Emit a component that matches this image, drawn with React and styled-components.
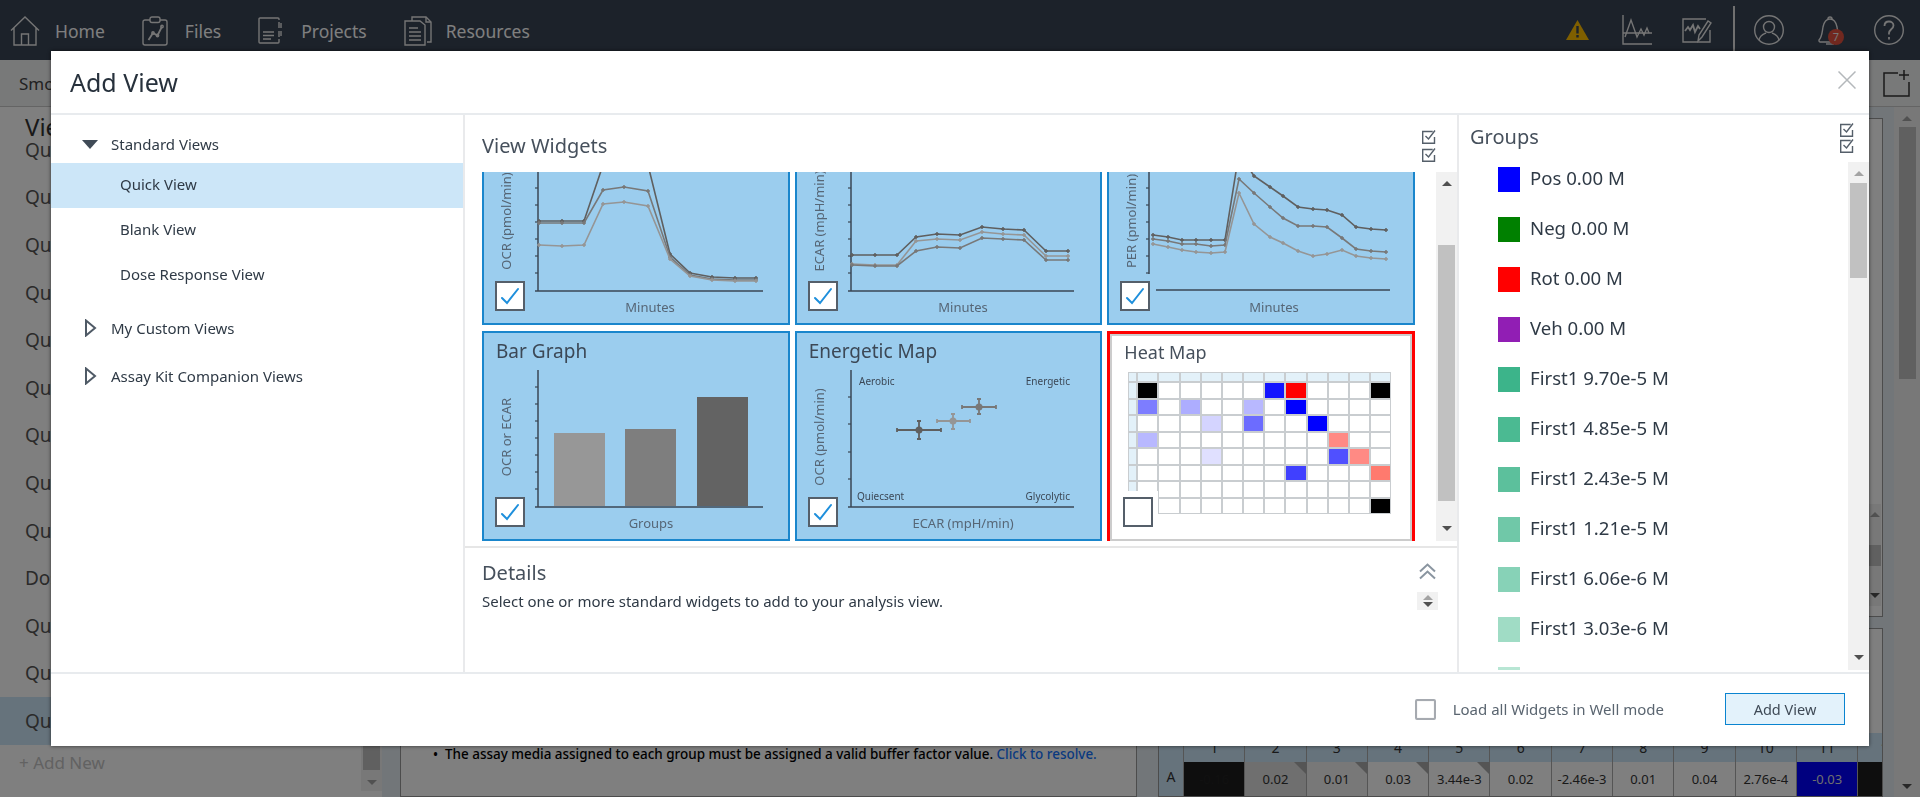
import React from "react";
import styled, { createGlobalStyle } from "styled-components";

const GlobalStyle = createGlobalStyle`
  html, body {
    margin: 0;
    padding: 0;
    height: 100%;
    overflow: hidden;
    font-family: "Noto Sans", "Open Sans", sans-serif;
    color: #333f4d;
  }
  * {
    box-sizing: border-box;
  }
`;

/* ---------- page behind the dialog ---------- */

const Page = styled.div`
  width: 1920px;
  height: 797px;
  overflow: hidden;
  background: #e4ecf2;
  display: flex;
  flex-direction: column;
`;

const NavBar = styled.div`
  height: 60px;
  flex: none;
  background: #384454;
  display: flex;
  align-items: center;
  padding-left: 10px;
  gap: 37px;
`;

const NavItem = styled.div`
  display: flex;
  align-items: center;
  gap: ${(p) => p.$gap}px;
  color: #fff;
  font-size: 17.5px;
  padding-top: 2px;
  svg {
    fill: none;
    stroke: #eaeaea;
    stroke-width: 1.4;
    display: block;
    margin-top: -1px;
  }
`;

const NavTools = styled.div`
  margin-left: auto;
  padding-right: 16px;
  display: flex;
  align-items: center;
  height: 100%;
  svg {
    fill: none;
    stroke: #eaeaea;
    stroke-width: 1.4;
    display: block;
  }
`;

const NavTool = styled.div`
  position: relative;
  margin-left: ${(p) => p.$ml}px;
`;

const NavDivider = styled.div`
  width: 2px;
  height: 48px;
  margin: 0 0 0 21px;
  background: #e0e0e0;
`;

const BellBadge = styled.span`
  position: absolute;
  right: 1px;
  bottom: 0;
  width: 16px;
  height: 16px;
  border-radius: 50%;
  background: #e2503e;
  color: #eee;
  font-size: 11px;
  line-height: 16px;
  text-align: center;
`;

const SubBar = styled.div`
  height: 47px;
  flex: none;
  background: #f1f2f3;
  border-bottom: 1px solid #c8c8c8;
  display: flex;
  align-items: center;
  justify-content: space-between;
  padding: 0 10px 0 19px;
  font-size: 17px;
  color: #444;
`;

const PageBody = styled.div`
  flex: 1;
  min-height: 0;
  display: flex;
`;

const SideCol = styled.div`
  width: 382px;
  flex: none;
  background: #fff;
  display: flex;
`;

const SideList = styled.div`
  flex: 1;
  min-width: 0;
`;

const SideHeading = styled.div`
  font-size: 24px;
  line-height: 30px;
  padding: 5px 0 0 25px;
  margin-bottom: -16px;
  color: #333;
`;

const SideRow = styled.div`
  height: 47.6px;
  display: flex;
  align-items: center;
  padding-left: 25px;
  font-size: 19px;
  color: #555;
  background: ${(p) => (p.$active ? "#cce6f8" : "transparent")};
`;

const AddNew = styled.div`
  padding: 6px 0 0 19px;
  font-size: 17px;
  color: #c4c4c4;
`;

const Track = styled.div`
  width: ${(p) => p.$w}px;
  flex: none;
  background: #f1f1f1;
  display: flex;
  flex-direction: column;
  align-items: center;
  justify-content: space-between;
  padding: ${(p) => p.$pad || "6px 0"};
`;

const SideTrack = styled(Track)`
  margin-bottom: 6px;
`;

const Thumb = styled.div`
  width: 17px;
  height: ${(p) => p.$h}px;
  margin-top: ${(p) => p.$mt}px;
  margin-bottom: auto;
  background: #c1c1c1;
`;

const Arrow = styled.div`
  width: 0;
  height: 0;
  border-left: 5px solid transparent;
  border-right: 5px solid transparent;
  ${(p) => (p.$down ? "border-top" : "border-bottom")}: 5px solid ${(p) => (p.$dim ? "#a3a3a3" : "#505050")};
`;

const MainPanel = styled.div`
  width: 737px;
  flex: none;
  margin-left: 18px;
  background: #fff;
  border: 1px solid #999;
  display: flex;
  flex-direction: column;
  justify-content: flex-end;
  padding: 0 0 32px 32px;
`;

const Notice = styled.div`
  font-size: 13.45px;
  font-weight: 500;
  line-height: 20px;
  color: #000;
  white-space: nowrap;
  a {
    color: #1474ff;
  }
`;

const RightCol = styled.div`
  width: 725px;
  flex: none;
  margin-left: 21px;
  display: flex;
  flex-direction: column;
  gap: 11px;
  padding-top: 11px;
`;

const TopPanel = styled.div`
  height: 499px;
  flex: none;
  background: #fff;
  border: 1px solid #999;
  display: flex;
  justify-content: flex-end;
  align-items: flex-end;
  padding-bottom: 10px;
`;

const MiniTrack = styled(Track)`
  height: 102px;
  margin-right: 1px;
`;

const MiniThumb = styled.div`
  width: 100%;
  height: 21px;
  background: #c1c1c1;
`;

const TablePanel = styled.div`
  flex: 1;
  min-height: 0;
  background: #fff;
  border: 1px solid #999;
  padding-top: 104px;
  overflow: hidden;
`;

const WellTable = styled.div`
  display: grid;
  grid-template-columns: 25px repeat(12, 61.3px);
  grid-template-rows: 29px 34px;
`;

const WellHead = styled.div`
  background: #cce6f8;
  border-right: 1px solid #aaa;
  font-size: 14px;
  text-align: center;
  line-height: 29px;
  color: #333;
`;

const WellCell = styled.div`
  position: relative;
  background: ${(p) => p.$bg || "#fff"};
  color: ${(p) => p.$fg || "#333"};
  border-right: 1px solid #aaa;
  font-size: 13px;
  line-height: 34px;
  text-align: center;
  ${(p) =>
    p.$flag &&
    `&::after {
      content: "";
      position: absolute;
      right: 0;
      top: 0;
      border-top: 12px solid #aaa;
      border-left: 12px solid transparent;
    }`}
`;

const PageScroll = styled(Track)`
  margin-left: 11px;
`;

/* ---------- dialog ---------- */

const Backdrop = styled.div`
  position: fixed;
  inset: 0;
  background: rgba(0, 0, 0, 0.5);
  padding: 51px;
`;

const Modal = styled.div`
  height: 100%;
  background: #fff;
  display: flex;
  flex-direction: column;
  box-shadow: 0 0 4px rgba(0, 0, 0, 0.6);
`;

const ModalHeader = styled.div`
  height: 64px;
  flex: none;
  border-bottom: 2px solid #e8ebee;
  display: flex;
  align-items: center;
  justify-content: space-between;
  padding: 0 13px 0 19px;
`;

const ModalTitle = styled.h1`
  margin: 0;
  font-size: 25px;
  font-weight: 400;
  color: #27313c;
  line-height: 34px;
`;

const CloseIcon = styled.svg`
  display: block;
  margin-bottom: 5px;
  fill: none;
  stroke: #b4b8bb;
  stroke-width: 1.5;
`;

const ModalBody = styled.div`
  height: 557px;
  flex: none;
  display: flex;
`;

const TreeCol = styled.div`
  width: 414px;
  flex: none;
  border-right: 2px solid #e9eaec;
  padding-top: 8px;
  font-size: 15px;
  color: #2f3a46;
`;

const TreeHead = styled.div`
  height: ${(p) => p.$h}px;
  margin-top: ${(p) => p.$mt || 0}px;
  display: flex;
  align-items: center;
  padding-left: 31px;
  padding-top: ${(p) => p.$pt || 0}px;
  padding-bottom: ${(p) => p.$pb || 0}px;
  gap: 13px;
  svg {
    display: block;
    flex: none;
  }
`;

const TreeLeaf = styled.div`
  height: 45px;
  display: flex;
  align-items: center;
  padding: 0 0 3px 69px;
  background: ${(p) => (p.$active ? "#cce6f8" : "transparent")};
`;

const CenterCol = styled.div`
  width: 994px;
  flex: none;
  border-right: 2px solid #e9eaec;
  display: flex;
  flex-direction: column;
`;

const PaneHead = styled.div`
  height: ${(p) => p.$h}px;
  flex: none;
  display: flex;
  justify-content: space-between;
  align-items: flex-start;
  padding: 0 ${(p) => p.$pr}px 0 ${(p) => p.$pl}px;
`;

const PaneTitle = styled.div`
  font-size: 20px;
  line-height: 26px;
  margin-top: ${(p) => p.$mt}px;
  color: #46505c;
`;

const CheckAll = styled.div`
  display: flex;
  flex-direction: column;
  gap: ${(p) => p.$gap}px;
  margin-top: ${(p) => p.$mt}px;
  svg {
    display: block;
    fill: none;
    stroke: #555f6a;
    stroke-width: 1.4;
  }
`;

const WidgetArea = styled.div`
  height: 369px;
  flex: none;
  display: flex;
`;

const WidgetViewport = styled.div`
  flex: 1;
  min-width: 0;
  overflow: hidden;
  padding-left: 17px;
`;

const WidgetGrid = styled.div`
  width: 933px;
  margin-top: -57px;
  display: grid;
  grid-template-columns: repeat(3, 1fr);
  grid-auto-rows: 210px;
  column-gap: 5px;
  row-gap: 6px;
`;

const Card = styled.div`
  position: relative;
  overflow: hidden;
  background: #9bcdee;
  border: 2px solid #1a86cc;
`;

/* runs past the bottom of the scroll area, so its lower red edge is hidden */
const HeatCard = styled.div`
  position: relative;
  overflow: hidden;
  height: 213px;
  background: #fff;
  border: 3px solid #ff0000;
  box-shadow: inset 0 0 0 2px #ccc;
`;

const CardTitle = styled.div`
  position: absolute;
  left: 12px;
  top: 4px;
  font-size: 19px;
  line-height: 28px;
  color: #3c4856;
`;

const HeatTitle = styled.div`
  font-size: 18px;
  line-height: 24px;
  padding: 6px 0 0 14px;
  color: #46505c;
`;

const Chart = styled.svg`
  display: block;
  font-family: "Noto Sans", "Open Sans", sans-serif;
`;

const CheckBox = styled.div`
  position: absolute;
  left: ${(p) => p.$left}px;
  top: ${(p) => p.$top}px;
  width: 30px;
  height: 30px;
  background: #fff;
  border: 2px solid #555f6a;
  svg {
    display: block;
    fill: none;
    stroke: #1e8fdc;
    stroke-width: 2;
  }
`;

const HeatGrid = styled.div`
  margin: 8px 0 0 18px;
  width: 263px;
  height: 142px;
  padding: 1px;
  background: #c9cdd0;
  display: grid;
  grid-template-columns: 7px repeat(12, 1fr);
  grid-template-rows: 8px repeat(8, 1fr);
  gap: 2px;
`;

const HeatCell = styled.div`
  background: ${(p) => p.$c};
`;

const CheckPatch = styled.div`
  position: absolute;
  left: 13px;
  top: 157px;
  width: 35px;
  height: 40px;
  background: #fff;
`;

const DetailsPane = styled.div`
  flex: 1;
  min-height: 0;
  margin-top: 5px;
  border-top: 2px solid #e6e6e6;
  display: flex;
  justify-content: space-between;
  padding: 12px 19px 0 17px;
`;

const DetailsTitle = styled.div`
  font-size: 20px;
  line-height: 26px;
  color: #46505c;
`;

const DetailsText = styled.div`
  margin-top: 5px;
  font-size: 15px;
  line-height: 20px;
  color: #2f3a46;
`;

const DetailsSide = styled.div`
  display: flex;
  flex-direction: column;
  align-items: center;
  width: 21px;
  gap: 12px;
  padding-top: 3px;
`;

const Spinner = styled.div`
  width: 21px;
  height: 18px;
  background: #f1f1f1;
  display: flex;
  flex-direction: column;
  align-items: center;
  justify-content: center;
  gap: 2px;
`;

const GroupsCol = styled.div`
  flex: 1;
  min-width: 0;
  display: flex;
  flex-direction: column;
`;

const GroupsArea = styled.div`
  height: 508px;
  flex: none;
  display: flex;
`;

const GroupList = styled.div`
  flex: 1;
  min-width: 0;
  overflow: hidden;
  padding: 5px 0 0 39px;
`;

const GroupRow = styled.div`
  height: 50px;
  display: flex;
  gap: 10px;
  font-size: 18.6px;
  line-height: 22px;
  color: #2f3a46;
`;

const Swatch = styled.div`
  width: 22px;
  height: 25px;
  flex: none;
  background: ${(p) => p.$c};
`;

const Footer = styled.div`
  flex: 1;
  display: flex;
  align-items: center;
  justify-content: flex-end;
  border-top: 2px solid #e8ebee;
  padding: 0 24px 2px 0;
`;

const FooterCheck = styled.div`
  width: 21px;
  height: 21px;
  border: 2px solid #a6aab0;
  border-radius: 2px;
  box-shadow: inset 0 0 1px #bbb;
  margin-right: 17px;
`;

const FooterLabel = styled.div`
  font-size: 15px;
  color: #5a6570;
  margin-right: 61px;
`;

const AddButton = styled.button`
  width: 120px;
  height: 32px;
  border: 1px solid #0a84d0;
  background: #e3f2fb;
  color: #3f4a56;
  font-family: inherit;
  font-size: 14.5px;
  padding: 0;
`;

/* ---------- data ---------- */

const groups = [
  ["Pos 0.00 M", "#0000ff"],
  ["Neg 0.00 M", "#008000"],
  ["Rot 0.00 M", "#ff0000"],
  ["Veh 0.00 M", "#911eb4"],
  ["First1 9.70e-5 M", "#3cb48a"],
  ["First1 4.85e-5 M", "#4bba92"],
  ["First1 2.43e-5 M", "#5cc09c"],
  ["First1 1.21e-5 M", "#70c8a8"],
  ["First1 6.06e-6 M", "#87d2b7"],
  ["First1 3.03e-6 M", "#a0dcc5"],
  ["First1 1.52e-6 M", "#b8e6d4"],
];

const heatColors = {
  "0-0": "#000",
  "0-6": "#1414ff",
  "0-7": "#ff0000",
  "0-11": "#000",
  "1-0": "#7d7dff",
  "1-2": "#adadff",
  "1-5": "#b8b8ff",
  "1-7": "#0000ff",
  "2-3": "#d4d4ff",
  "2-5": "#6c6cff",
  "2-8": "#0000ff",
  "3-0": "#b8b8ff",
  "3-9": "#ff8a84",
  "4-3": "#e0e0ff",
  "4-9": "#5050ff",
  "4-10": "#ff8a84",
  "5-7": "#4040ff",
  "5-11": "#ff7a6e",
  "7-11": "#000",
};

const wellValues = [
  { v: "-0.16", bg: "#1c1c1c", fg: "#222" },
  { v: "0.02", bg: "#dedede", flag: true },
  { v: "0.01", bg: "#f0f0f0", flag: true },
  { v: "0.03", flag: true },
  { v: "3.44e-3", flag: true },
  { v: "0.02" },
  { v: "-2.46e-3" },
  { v: "0.01" },
  { v: "0.04" },
  { v: "2.76e-4" },
  { v: "-0.03", bg: "#0000ff", fg: "#ddd" },
  { v: "0.", bg: "#1c1c1c", fg: "#444" },
];

const DARK = "#5f5f5f";
const MID = "#787878";
const LIGHT = "#959595";

const ocrX = [57, 80, 102, 121, 142, 166, 188, 208, 230, 253, 274];
const ocrSeries = [
  [DARK, [106, 106, 106, 50, 40, 50, 139, 158, 162, 163, 163]],
  [MID, [108, 108, 108, 75, 72, 76, 142, 160, 164, 165, 165]],
  [LIGHT, [130, 131, 130, 89, 87, 91, 144, 161, 165, 166, 166]],
];

const ecarX = [57, 80, 102, 121, 142, 165, 187, 208, 229, 251, 273];
const ecarSeries = [
  [DARK, [140, 140, 140, 122, 119, 120, 112, 114, 115, 136, 136]],
  [LIGHT, [149, 150, 150, 126, 124, 125, 117, 119, 120, 141, 141]],
  [MID, [150, 151, 151, 136, 132, 133, 123, 124, 125, 145, 145]],
];

const perX = [46, 61, 75, 89, 104, 118, 132, 147, 163, 176, 191, 206, 220, 235, 249, 264, 279];
const perSeries = [
  [DARK, [120, 122, 125, 125, 125, 125, 38, 61, 72, 81, 92, 94, 95, 100, 112, 114, 115]],
  [MID, [124, 126, 129, 129, 131, 130, 64, 78, 92, 103, 111, 111, 112, 123, 134, 136, 137]],
  [LIGHT, [129, 132, 135, 137, 138, 137, 78, 109, 122, 128, 136, 141, 139, 135, 141, 143, 144]],
];

const energy = [
  { c: DARK, x: 124, y: 99, l: 102, r: 146, t: 90, b: 108 },
  { c: LIGHT, x: 158, y: 90, l: 142, r: 175, t: 83, b: 98 },
  { c: MID, x: 184, y: 76, l: 167, r: 201, t: 68, b: 83 },
];

const AXIS = "#3a4654";
const LABEL = "#566676";
const TICKS = [56, 73, 90, 107, 124, 141, 158];

/* ---------- icons ---------- */

const HomeIcon = () => (
  <svg width="30" height="30" viewBox="0 0 30 30">
    <path d="M1 14.5 15 1l14 13.5M4 12v17h22V12M11.5 29V18h7v11" />
  </svg>
);

const FilesIcon = () => (
  <svg width="26" height="30" viewBox="0 0 26 30">
    <path d="M8 4H3a2 2 0 0 0-2 2v21a2 2 0 0 0 2 2h20a2 2 0 0 0 2-2V6a2 2 0 0 0-2-2h-5" />
    <rect x="8" y="1" width="10" height="5.5" rx="2" />
    <path d="M6.5 24l4.5-7 4.5 2.5 4.5-9" strokeWidth="1.8" />
    <circle cx="11" cy="17" r="1.2" />
    <circle cx="15.5" cy="19.5" r="1.2" />
    <circle cx="20" cy="10.5" r="1.2" />
  </svg>
);

const ProjectsIcon = () => (
  <svg width="24" height="27" viewBox="0 0 24 27">
    <path d="M21 3V2a1 1 0 0 0-1-1H2a1 1 0 0 0-1 1v23a1 1 0 0 0 1 1h18a1 1 0 0 0 1-1v-3M21 5v6M23 6v5M21 14v6M23 14v5" />
    <path d="M5 15h11M5 18.5h11M5 22h8" />
  </svg>
);

const ResourcesIcon = () => (
  <svg width="28" height="30" viewBox="0 0 28 30">
    <path d="M8 5V1h14l5 5v20h-4" />
    <path d="M22 1v5h5" />
    <path d="M1 5h15l5 4v20H1z" />
    <path d="M5 12h9M5 16h12M5 20h12M5 24h12" />
  </svg>
);

const WarningIcon = () => (
  <svg width="23" height="20" viewBox="0 0 23 20">
    <path d="M11.5 0 23 20H0z" fill="#ffbf00" stroke="none" />
    <rect x="10.3" y="6" width="2.4" height="7.5" fill="#384454" stroke="none" />
    <rect x="10.3" y="15" width="2.4" height="2.5" fill="#384454" stroke="none" />
  </svg>
);

const TraceIcon = () => (
  <svg width="30" height="30" viewBox="0 0 30 30">
    <path d="M1 0v29h29M1 18h29" />
    <path d="M3 22 9 5l6 17 4-8 3 6 3-7 2 5" />
  </svg>
);

const EditTraceIcon = () => (
  <svg width="30" height="25" viewBox="0 0 30 25">
    <path d="M24 1H1v23h27V12" />
    <path d="M3 13l3-4 2 3 3-5 2 7 3-6 2 3" strokeWidth="1.8" />
    <path d="M16 23l1-6 9-14 3 2-9 14z" />
  </svg>
);

const UserIcon = () => (
  <svg width="30" height="30" viewBox="0 0 30 30">
    <circle cx="15" cy="15" r="14.3" />
    <circle cx="15" cy="12" r="5.5" />
    <path d="M5 25c1-5 5-6 7-7M25 25c-1-5-5-6-7-7" />
  </svg>
);

const BellIcon = () => (
  <svg width="30" height="30" viewBox="0 0 30 30">
    <path d="M13 4a2 2 0 0 1 4 0" />
    <path d="M4 25c3-3 3-7 4-13 1-5 4-8 7-8s6 3 7 8c1 6 1 10 4 13 0 1-1 2-2 2H5c-1 0-1-1-1-2z" />
    <path d="M11 29h8" />
  </svg>
);

const HelpIcon = () => (
  <svg width="30" height="30" viewBox="0 0 30 30">
    <circle cx="15" cy="15" r="14.3" />
    <path d="M10.5 11c0-3 2-4.5 4.5-4.5s4.5 1.7 4.5 4c0 3.5-4.5 4-4.5 7.500v1.500" strokeWidth="1.8" />
    <path d="M15 22v2.500" strokeWidth="1.8" />
  </svg>
);

const NewPanelIcon = () => (
  <svg width="27" height="27" viewBox="0 0 27 27" fill="none" stroke="#333" strokeWidth="1.5">
    <path d="M15 3H1v23h25V12" />
    <path d="M21 0v10M16 5h10" />
  </svg>
);

const TickSmall = () => (
  <svg width="14" height="14" viewBox="0 0 14 14">
    <path d="M12.500 7v6.300H.7V1.500h10" />
    <path d="M3.500 6l3 3 6.500-8.500" />
  </svg>
);

const Tick = () => (
  <svg width="26" height="26" viewBox="0 0 26 26">
    <path d="M5 15l5 5L21 6" strokeLinecap="round" />
  </svg>
);

const TreeOpen = () => (
  <svg width="16" height="9" viewBox="0 0 16 9">
    <path d="M0 0h16L8 9z" fill="#3f4a56" />
  </svg>
);

const TreeClosed = () => (
  <svg width="16" height="18" viewBox="0 0 16 18" fill="none" stroke="#4f5a66" strokeWidth="2">
    <path d="M4 1.500 13 9l-9 7.500z" />
  </svg>
);

const DoubleUp = () => (
  <svg width="17" height="17" viewBox="0 0 17 17" fill="none" stroke="#8a95a0" strokeWidth="2" style={{ display: "block" }}>
    <path d="M1 8.500 8.500 1.500 16 8.500M1 15.500l7.500-7 7.500 7" />
  </svg>
);

/* ---------- charts ---------- */

const Axes = ({ x, end, ticks = TICKS, top = 39, y = 176, startX }) => (
  <g stroke={AXIS} fill="none">
    <path d={`M${x} ${top}V${y}`} strokeWidth="1.5" />
    <path d={`M${startX ?? x - 3} ${y}H${end}`} strokeWidth="1.5" />
    {ticks.map((t) => (
      <path key={t} d={`M${x - 3} ${t}H${x}`} strokeWidth="1.2" />
    ))}
  </g>
);

const Lines = ({ xs, series }) =>
  series.map(([color, ys], i) => (
    <g key={i} stroke={color} fill="none">
      <polyline points={xs.map((x, j) => `${x},${ys[j]}`).join(" ")} strokeWidth="1.6" />
      {xs.map((x, j) => (
        <path key={j} d={`M${x - 2} ${ys[j]}h4M${x} ${ys[j] - 2}v4`} strokeWidth="1.5" />
      ))}
    </g>
  ));

const YLabel = ({ children }) => (
  <text transform="rotate(-90 25 106)" x="25" y="110" textAnchor="middle" fontSize="13" fill={LABEL}>
    {children}
  </text>
);

const XLabel = ({ children, x = 168 }) => (
  <text x={x} y="197" textAnchor="middle" fontSize="13" fill={LABEL}>
    {children}
  </text>
);

const ChartFrame = ({ children }) => (
  <Chart width="304" height="206" viewBox="2 2 304 206">
    {children}
  </Chart>
);

const WidgetCheck = () => (
  <CheckBox $left={11} $top={164}>
    <Tick />
  </CheckBox>
);

const OcrCard = () => (
  <Card>
    <ChartFrame>
      <Axes x={56} end={281} />
      <Lines xs={ocrX} series={ocrSeries} />
      <YLabel>OCR (pmol/min)</YLabel>
      <XLabel>Minutes</XLabel>
    </ChartFrame>
    <WidgetCheck />
  </Card>
);

const EcarCard = () => (
  <Card>
    <ChartFrame>
      <Axes x={56} end={279} />
      <Lines xs={ecarX} series={ecarSeries} />
      <YLabel>ECAR (mpH/min)</YLabel>
      <XLabel>Minutes</XLabel>
    </ChartFrame>
    <WidgetCheck />
  </Card>
);

const PerCard = () => (
  <Card>
    <ChartFrame>
      <Axes x={42} end={283} y={160} />
      <path d="M49 175H283" stroke={AXIS} strokeWidth="1.5" />
      <path d="M39 160H283" stroke="#9bcdee" strokeWidth="2" />
      <Lines xs={perX} series={perSeries} />
      <YLabel>PER (pmol/min)</YLabel>
      <XLabel x={167}>Minutes</XLabel>
    </ChartFrame>
    <WidgetCheck />
  </Card>
);

const BarCard = () => (
  <Card>
    <CardTitle>Bar Graph</CardTitle>
    <ChartFrame>
      <Axes x={56} end={281} />
      <rect x="72" y="102" width="51" height="73" fill="#979797" />
      <rect x="143" y="98" width="51" height="77" fill="#7e7e7e" />
      <rect x="215" y="66" width="51" height="109" fill="#636363" />
      <YLabel>OCR or ECAR</YLabel>
      <XLabel x={169}>Groups</XLabel>
    </ChartFrame>
    <WidgetCheck />
  </Card>
);

const EnergeticCard = () => (
  <Card>
    <CardTitle>Energetic Map</CardTitle>
    <ChartFrame>
      <Axes x={56} end={279} ticks={[66, 93, 121, 148]} />
      <g fontSize="10" fill="#3c4856">
        <text x="64" y="54">Aerobic</text>
        <text x="275" y="54" textAnchor="end">Energetic</text>
        <text x="62" y="169">Quiecsent</text>
        <text x="275" y="169" textAnchor="end">Glycolytic</text>
      </g>
      {energy.map((p) => (
        <g key={p.x} stroke={p.c} fill="none" strokeWidth="1.8">
          <path d={`M${p.l} ${p.y}H${p.r}M${p.l} ${p.y - 2}v4M${p.r} ${p.y - 2}v4`} />
          <path d={`M${p.x} ${p.t}V${p.b}M${p.x - 2} ${p.t}h4M${p.x - 2} ${p.b}h4`} />
          <circle cx={p.x} cy={p.y} r="3.5" fill={p.c} stroke="none" />
        </g>
      ))}
      <YLabel>OCR (pmol/min)</YLabel>
      <XLabel>ECAR (mpH/min)</XLabel>
    </ChartFrame>
    <WidgetCheck />
  </Card>
);

const HeatMapCard = () => {
  const cells = [];
  for (let r = -1; r < 8; r++) {
    for (let c = -1; c < 12; c++) {
      const head = r < 0 || c < 0;
      cells.push(<HeatCell key={`${r}/${c}`} $c={head ? "#e3f1f9" : heatColors[`${r}-${c}`] || "#fff"} />);
    }
  }
  return (
    <HeatCard>
      <HeatTitle>Heat Map</HeatTitle>
      <HeatGrid>{cells}</HeatGrid>
      <CheckPatch />
      <CheckBox $left={13} $top={163} />
    </HeatCard>
  );
};

/* ---------- page ---------- */

const sideItems = Array.from({ length: 13 }, (_, i) => (i === 9 ? "Dose Response View" : "Quick View"));

const App = () => {
  return (
    <>
      <GlobalStyle />
      <Page>
        <NavBar>
          <NavItem $gap={15}>
            <HomeIcon />
            Home
          </NavItem>
          <NavItem $gap={17}>
            <FilesIcon />
            Files
          </NavItem>
          <NavItem $gap={19}>
            <ProjectsIcon />
            Projects
          </NavItem>
          <NavItem $gap={14}>
            <ResourcesIcon />
            Resources
          </NavItem>
          <NavTools>
            <NavTool $ml={0}>
              <WarningIcon />
            </NavTool>
            <NavTool $ml={33}>
              <TraceIcon />
            </NavTool>
            <NavTool $ml={30}>
              <EditTraceIcon />
            </NavTool>
            <NavDivider />
            <NavTool $ml={19}>
              <UserIcon />
            </NavTool>
            <NavTool $ml={31}>
              <BellIcon />
              <BellBadge>7</BellBadge>
            </NavTool>
            <NavTool $ml={29}>
              <HelpIcon />
            </NavTool>
          </NavTools>
        </NavBar>
        <SubBar>
          <span>Smoke Test</span>
          <NewPanelIcon />
        </SubBar>
        <PageBody>
          <SideCol>
            <SideList>
              <SideHeading>Views</SideHeading>
              {sideItems.map((item, i) => (
                <SideRow key={i} $active={i === 12}>
                  {item}
                </SideRow>
              ))}
              <AddNew>+ Add New</AddNew>
            </SideList>
            <SideTrack $w={21}>
              <Arrow $dim />
              <Thumb $h={647} $mt={5} />
              <Arrow $down $dim />
            </SideTrack>
          </SideCol>
          <MainPanel>
            <Notice>
              • &nbsp;The assay media assigned to each group must be assigned a valid buffer factor value.{" "}
              <a>Click to resolve.</a>
            </Notice>
          </MainPanel>
          <RightCol>
            <TopPanel>
              <MiniTrack $w={13} $pad="8px 0">
                <Arrow $dim />
                <MiniThumb />
                <Arrow $down />
              </MiniTrack>
            </TopPanel>
            <TablePanel>
              <WellTable>
                <WellHead />
                {wellValues.map((_, i) => (
                  <WellHead key={i}>{i + 1}</WellHead>
                ))}
                <WellHead>A</WellHead>
                {wellValues.map((w, i) => (
                  <WellCell key={i} $bg={w.bg} $fg={w.fg} $flag={w.flag}>
                    {w.v}
                  </WellCell>
                ))}
              </WellTable>
            </TablePanel>
          </RightCol>
          <PageScroll $w={26} $pad="9px 0 8px">
            <Arrow $dim />
            <Thumb $h={252} $mt={6} />
            <Arrow $down />
          </PageScroll>
        </PageBody>
      </Page>
      <Backdrop>
        <Modal>
          <ModalHeader>
            <ModalTitle>Add View</ModalTitle>
            <CloseIcon width="18" height="18" viewBox="0 0 18 18">
              <path d="M.5.500l17 17M17.500.500l-17 17" />
            </CloseIcon>
          </ModalHeader>
          <ModalBody>
            <TreeCol>
              <TreeHead $h={40} $pt={2}>
                <TreeOpen />
                Standard Views
              </TreeHead>
              <TreeLeaf $active>Quick View</TreeLeaf>
              <TreeLeaf>Blank View</TreeLeaf>
              <TreeLeaf>Dose Response View</TreeLeaf>
              <TreeHead $h={48} $mt={7} $pb={2}>
                <TreeClosed />
                My Custom Views
              </TreeHead>
              <TreeHead $h={48} $pb={2}>
                <TreeClosed />
                Assay Kit Companion Views
              </TreeHead>
            </TreeCol>
            <CenterCol>
              <PaneHead $h={57} $pl={17} $pr={21}>
                <PaneTitle $mt={18}>View Widgets</PaneTitle>
                <CheckAll $mt={15} $gap={4}>
                  <TickSmall />
                  <TickSmall />
                </CheckAll>
              </PaneHead>
              <WidgetArea>
                <WidgetViewport>
                  <WidgetGrid>
                    <OcrCard />
                    <EcarCard />
                    <PerCard />
                    <BarCard />
                    <EnergeticCard />
                    <HeatMapCard />
                  </WidgetGrid>
                </WidgetViewport>
                <Track $w={21} $pad="9px 0 10px">
                  <Arrow />
                  <Thumb $h={256} $mt={59} />
                  <Arrow $down />
                </Track>
              </WidgetArea>
              <DetailsPane>
                <div>
                  <DetailsTitle>Details</DetailsTitle>
                  <DetailsText>Select one or more standard widgets to add to your analysis view.</DetailsText>
                </div>
                <DetailsSide>
                  <DoubleUp />
                  <Spinner>
                    <Arrow $dim />
                    <Arrow $down />
                  </Spinner>
                </DetailsSide>
              </DetailsPane>
            </CenterCol>
            <GroupsCol>
              <PaneHead $h={47} $pl={11} $pr={15}>
                <PaneTitle $mt={9}>Groups</PaneTitle>
                <CheckAll $mt={8} $gap={2}>
                  <TickSmall />
                  <TickSmall />
                </CheckAll>
              </PaneHead>
              <GroupsArea>
                <GroupList>
                  {groups.map(([name, color]) => (
                    <GroupRow key={name}>
                      <Swatch $c={color} />
                      {name}
                    </GroupRow>
                  ))}
                </GroupList>
                <Track $w={21} $pad="9px 0 10px">
                  <Arrow $dim />
                  <Thumb $h={95} $mt={7} />
                  <Arrow $down />
                </Track>
              </GroupsArea>
            </GroupsCol>
          </ModalBody>
          <Footer>
            <FooterCheck />
            <FooterLabel>Load all Widgets in Well mode</FooterLabel>
            <AddButton>Add View</AddButton>
          </Footer>
        </Modal>
      </Backdrop>
    </>
  );
};

export default App;
